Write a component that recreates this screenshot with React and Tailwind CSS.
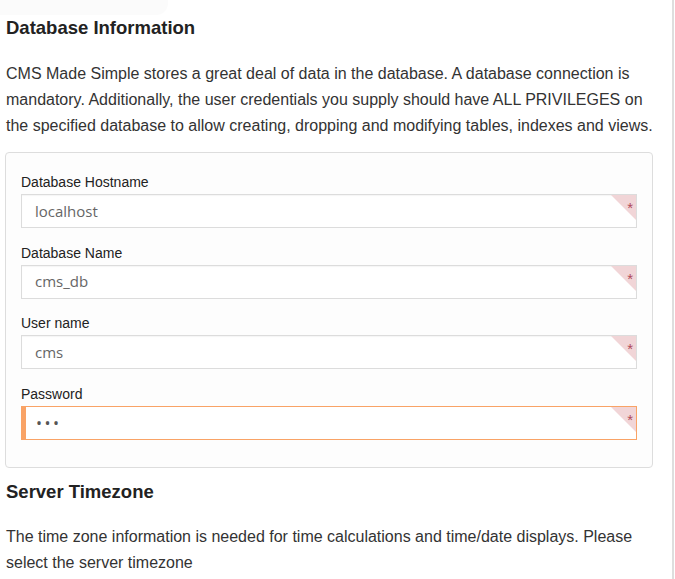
import React from 'react';

const FIELDS = [
    { label: 'Database Hostname', value: 'localhost' },
    { label: 'Database Name', value: 'cms_db' },
    { label: 'User name', value: 'cms' },
    { label: 'Password', value: '•••', active: true },
];

function Field({ label, value, active }) {
    return (
        <div className="mb-[14.7px]">
            <label className="block text-[14px] leading-[20px] text-[#222] mb-[2px]">{label}</label>
            <div
                className={`relative h-[34px] bg-white flex items-center overflow-hidden ${active
                    ? 'border border-[#f9a366] border-l-[5px] pl-[10px]'
                    : 'border border-[#dcdcdc] pl-[13px] shadow-[inset_0_1px_1px_rgba(0,0,0,0.04)]'
                    }`}
            >
                <span className={`font-['Open_Sans',sans-serif] ${active ? 'text-[#555] tracking-[2.5px] text-[16px]' : 'text-[15px] text-[#666]'}`}>
                    {value}
                </span>
                <div className="absolute top-0 right-0 w-0 h-0 border-t-[25px] border-t-[#f1d5d7] border-l-[25px] border-l-transparent" />
                <span className="absolute top-[5px] right-[3px] text-[15px] leading-[15px] text-[#b04a5a]">*</span>
            </div>
        </div>
    );
}

export default function App() {
    return (
        <div className="relative w-[675px] h-[579px] overflow-hidden bg-white font-['Liberation_Sans',Arial,sans-serif] text-[#333]">
            <div className="absolute top-0 left-0 w-[168px] h-[15px] bg-[#fbfbfb] rounded-br-[12px]" />
            <div className="absolute top-0 right-[1px] w-[2px] h-full bg-[#dedede]" />

            <div className="relative w-[660px] pl-[6px] pt-[17px]">
                <h2 className="text-[18.5px] leading-[22px] font-bold text-[#222]">Database Information</h2>
                <p className="mt-[22px] text-[16px] leading-[26px] pr-[6px]">
                    CMS Made Simple stores a great deal of data in the database. A database connection is mandatory. Additionally, the user credentials you supply should have ALL PRIVILEGES on the specified database to allow creating, dropping and modifying tables, indexes and views.
                </p>

                <div className="ml-[-1px] mt-[13px] w-[648px] h-[316px] border border-[#dddddd] rounded-[4px] bg-[#fdfdfd] pt-[19px] px-[15px]">
                    {FIELDS.map((f) => (
                        <Field key={f.label} {...f} />
                    ))}
                </div>

                <h2 className="mt-[13px] text-[18.5px] leading-[22px] font-bold text-[#222]">Server Timezone</h2>
                <p className="mt-[21px] text-[16px] leading-[26px] pr-[20px]">
                    The time zone information is needed for time calculations and time/date displays. Please select the server timezone
                </p>
            </div>
        </div>
    );
}
